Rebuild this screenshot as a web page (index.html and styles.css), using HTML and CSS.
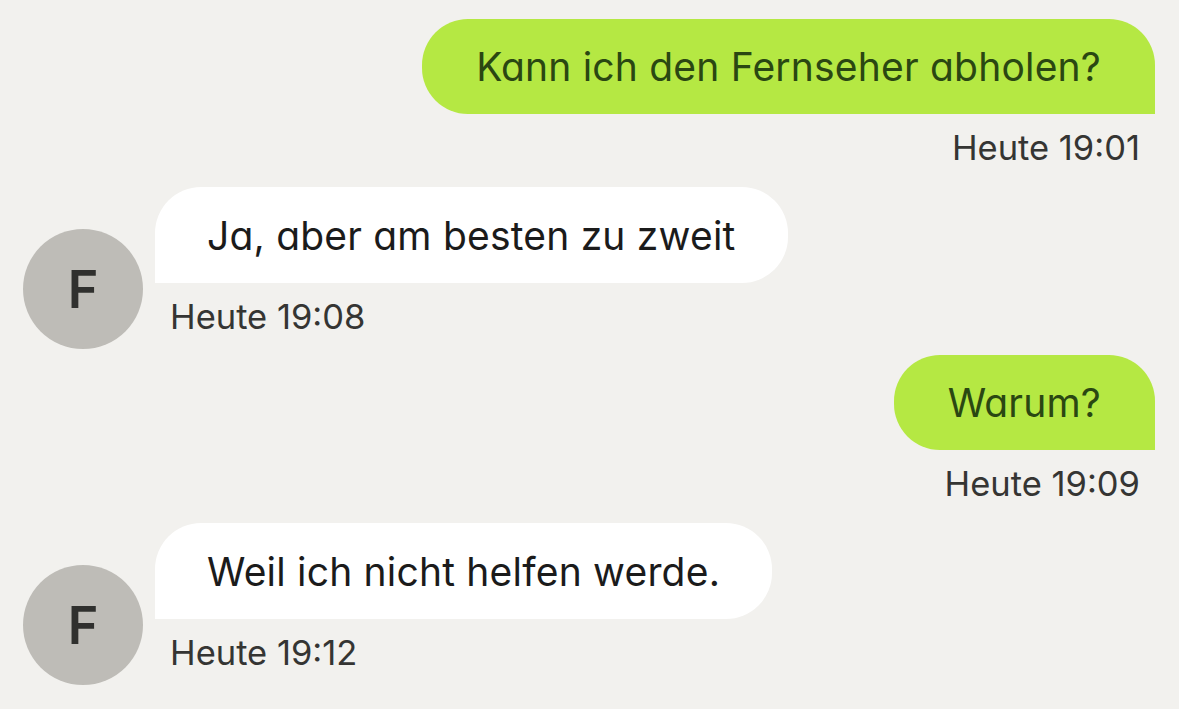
FILE: index.html
```html
<!DOCTYPE html>
<html lang="de">
<head>
<meta charset="utf-8">
<link rel="stylesheet" href="styles.css">
</head>
<body>
<div class="chat">
  <div class="row out">
    <div class="bubble green">Kann ich den Fernseher abholen?</div>
    <div class="time">Heute 19:01</div>
  </div>
  <div class="row in">
    <div class="avatar">F</div>
    <div class="group">
      <div class="bubble white">Ja, aber am besten zu zweit</div>
      <div class="time">Heute 19:08</div>
    </div>
  </div>
  <div class="row out">
    <div class="bubble green">Warum?</div>
    <div class="time">Heute 19:09</div>
  </div>
  <div class="row in">
    <div class="avatar">F</div>
    <div class="group">
      <div class="bubble white">Weil ich nicht helfen werde.</div>
      <div class="time">Heute 19:12</div>
    </div>
  </div>
</div>
</body>
</html>
```

FILE: styles.css
```css
html, body {
  margin: 0;
  padding: 0;
  background: #f2f1ee;
}
body {
  font-family: Inter, "Noto Sans", sans-serif;
  font-feature-settings: "cv11" 1;
  width: 1179px;
  height: 709px;
  overflow: hidden;
}
.chat {
  padding-top: 19px;
  display: flex;
  flex-direction: column;
}
.row.out {
  display: flex;
  flex-direction: column;
  align-items: flex-end;
  padding-right: 24px;
  margin-bottom: 19px;
}
.row.in {
  display: flex;
  align-items: flex-start;
  padding-left: 23px;
  margin-bottom: 6px;
}
.bubble {
  font-size: 39px;
  line-height: 47px;
  letter-spacing: 0.2px;
  padding: 24px 54px 24px 54px;
  white-space: nowrap;
}
.bubble.green {
  background: #b5e843;
  color: #2a4712;
  border-radius: 46px 46px 0 46px;
}
.bubble.white {
  background: #ffffff;
  color: #1b1b1b;
  border-radius: 46px 46px 46px 0;
  padding: 25px 52px 24px 52px;
}
.time {
  font-size: 34.5px;
  line-height: 40px;
  color: #353533;
  margin-top: 14px;
}
.row.out .time {
  margin-right: 15px;
}
.row.in .time {
  padding-left: 15px;
}
.avatar {
  width: 120px;
  height: 120px;
  border-radius: 50%;
  background: #bebcb7;
  color: #30302e;
  font-size: 52px;
  font-weight: 600;
  display: flex;
  align-items: center;
  justify-content: center;
  margin-top: 42px;
  flex-shrink: 0;
}
.group {
  margin-left: 12px;
  display: flex;
  flex-direction: column;
  align-items: flex-start;
}
```
